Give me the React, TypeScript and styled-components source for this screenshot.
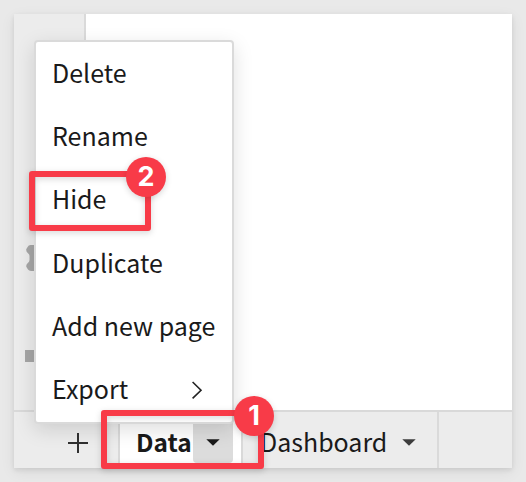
import React from "react";
import styled, { createGlobalStyle } from "styled-components";

const GlobalStyle = createGlobalStyle`
  * { box-sizing: border-box; }
  body {
    margin: 0;
    background: #e9e9e9;
    color: #1a1a1a;
    font-family: "Noto Sans CJK SC", "Noto Sans", sans-serif;
    font-size: 25px;
    overflow: hidden;
  }
`;

const Page = styled.div`
  width: 526px;
  height: 482px;
  padding: 14px;
`;

const Window = styled.div`
  position: relative;
  height: 454px;
  display: flex;
  flex-direction: column;
  background: #fff;
  box-shadow: 0 4px 14px rgba(0, 0, 0, 0.07), 0 2px 5px rgba(0, 0, 0, 0.09);
`;

const Workspace = styled.div`
  flex: 1;
  display: flex;
`;

const Sidebar = styled.div`
  width: 72px;
  padding: 229px 0 0 11px;
  display: flex;
  flex-direction: column;
  background: #ececec;
  border-right: 2px solid #dadada;
`;

const SidebarIcon = styled.svg`
  display: block;
  width: 12px;
  height: 122px;
`;

const TabBar = styled.div`
  height: 58px;
  display: flex;
  background: #ececec;
  border-top: 2px solid #d9d9d9;
`;

const AddPage = styled.button`
  width: 104px;
  padding: 5px 0 0 24px;
  border: 0;
  background: transparent;
  display: flex;
  align-items: center;
  justify-content: center;
  svg { display: block; }
`;

const Tab = styled.div<{ $active?: boolean; $width: number }>`
  width: ${(p) => p.$width}px;
  display: flex;
  align-items: center;
  padding-left: ${(p) => (p.$active ? 16 : 17)}px;
  border-left: 2px solid #d9d9d9;
  background: ${(p) => (p.$active ? "#fff" : "transparent")};
  font-weight: ${(p) => (p.$active ? 700 : 400)};
  font-size: ${(p) => (p.$active ? 24.5 : 25)}px;
`;

const TabLabel = styled.span<{ $width: number; $active?: boolean }>`
  width: ${(p) => p.$width}px;
  line-height: 40px;
  padding-top: ${(p) => (p.$active ? 4 : 2)}px;
  white-space: nowrap;
`;

const TabToggle = styled.button<{ $active?: boolean }>`
  width: 40px;
  height: 45px;
  margin-top: 6px;
  align-self: flex-start;
  padding: 0;
  border: 0;
  border-radius: 4px;
  display: flex;
  align-items: flex-start;
  justify-content: center;
  background: ${(p) => (p.$active ? "#dcdcdc" : "transparent")};
  color: ${(p) => (p.$active ? "#1a1a1a" : "#3c3c3c")};
  svg { display: block; margin-top: 21px; }
`;

const TabEnd = styled.div`
  width: 2px;
  background: #dadada;
`;

const Menu = styled.div`
  position: absolute;
  left: 20px;
  top: 26px;
  width: 200px;
  height: 384px;
  display: flex;
  flex-direction: column;
  background: #fff;
  border: 2px solid #dadada;
  border-radius: 4px;
  box-shadow: 0 6px 20px rgba(0, 0, 0, 0.13);
`;

const MenuItem = styled.div`
  flex: 1;
  display: flex;
  align-items: center;
  justify-content: space-between;
  padding: 0 29px 4px 16px;
  line-height: 40px;
  white-space: nowrap;
  svg { margin-top: 3px; }
`;

const Highlight = styled.div<{ $x: number; $y: number; $w: number; $h: number }>`
  position: absolute;
  left: ${(p) => p.$x}px;
  top: ${(p) => p.$y}px;
  width: ${(p) => p.$w}px;
  height: ${(p) => p.$h}px;
  border: 6px solid #f83b48;
  border-radius: 3px;
  filter: drop-shadow(0 2px 3px rgba(0, 0, 0, 0.16));
`;

const Badge = styled.div<{ $x: number; $y: number }>`
  position: absolute;
  left: ${(p) => p.$x}px;
  top: ${(p) => p.$y}px;
  width: 40px;
  height: 40px;
  border-radius: 50%;
  background: #f83b48;
  color: #fff;
  font: 700 27px/39px Inter, sans-serif;
  text-align: center;
  box-shadow: 0 2px 6px rgba(0, 0, 0, 0.16);
`;

const Caret = () => (
  <svg width="14" height="7" viewBox="0 0 14 7">
    <path d="M0.3 0.2H13.7L7 6.8Z" fill="currentColor" />
  </svg>
);

const Chevron = () => (
  <svg width="12" height="20" viewBox="0 0 12 20">
    <path d="M1.6 2L10 10.2L1.6 18.4" fill="none" stroke="#222" strokeWidth="1.6" />
  </svg>
);

const items = ["Delete", "Rename", "Hide", "Duplicate", "Add new page", "Export"];

export default function App() {
  return (
    <Page>
      <GlobalStyle />
      <Window>
        <Workspace>
          <Sidebar>
            <SidebarIcon viewBox="0 0 12 122">
              <path
                d="M9 2H5.5Q3.5 2 2.6 4L1.2 6.3Q1 8.5 3 10.3Q4.5 11.2 4.5 13V17Q4.5 19 2.6 20.2Q0.8 21.8 1.4 24L3 26.6Q4 28 6 28H9Z"
                fill="#a6a6a6"
              />
              <path d="M0 107H9V119H0Z" fill="#a6a6a6" />
            </SidebarIcon>
          </Sidebar>
        </Workspace>
        <TabBar>
          <AddPage aria-label="Add page">
            <svg width="20" height="20" viewBox="0 0 20 20">
              <path d="M10 0V20M0 10H20" stroke="#303030" strokeWidth="2" />
            </svg>
          </AddPage>
          <Tab $active $width={123}>
            <TabLabel $active $width={57}>Data</TabLabel>
            <TabToggle $active aria-label="Data options"><Caret /></TabToggle>
          </Tab>
          <Tab $width={196}>
            <TabLabel $width={129}>Dashboard</TabLabel>
            <TabToggle aria-label="Dashboard options"><Caret /></TabToggle>
          </Tab>
          <TabEnd />
        </TabBar>
        <Menu>
          {items.map((label) => (
            <MenuItem key={label}>
              {label}
              {label === "Export" && <Chevron />}
            </MenuItem>
          ))}
        </Menu>
        <Highlight $x={15} $y={157} $w={122} $h={60} />
        <Badge $x={112} $y={143}>2</Badge>
        <Highlight $x={87} $y={396} $w={163} $h={59} />
        <Badge $x={220} $y={382}>1</Badge>
      </Window>
    </Page>
  );
}
